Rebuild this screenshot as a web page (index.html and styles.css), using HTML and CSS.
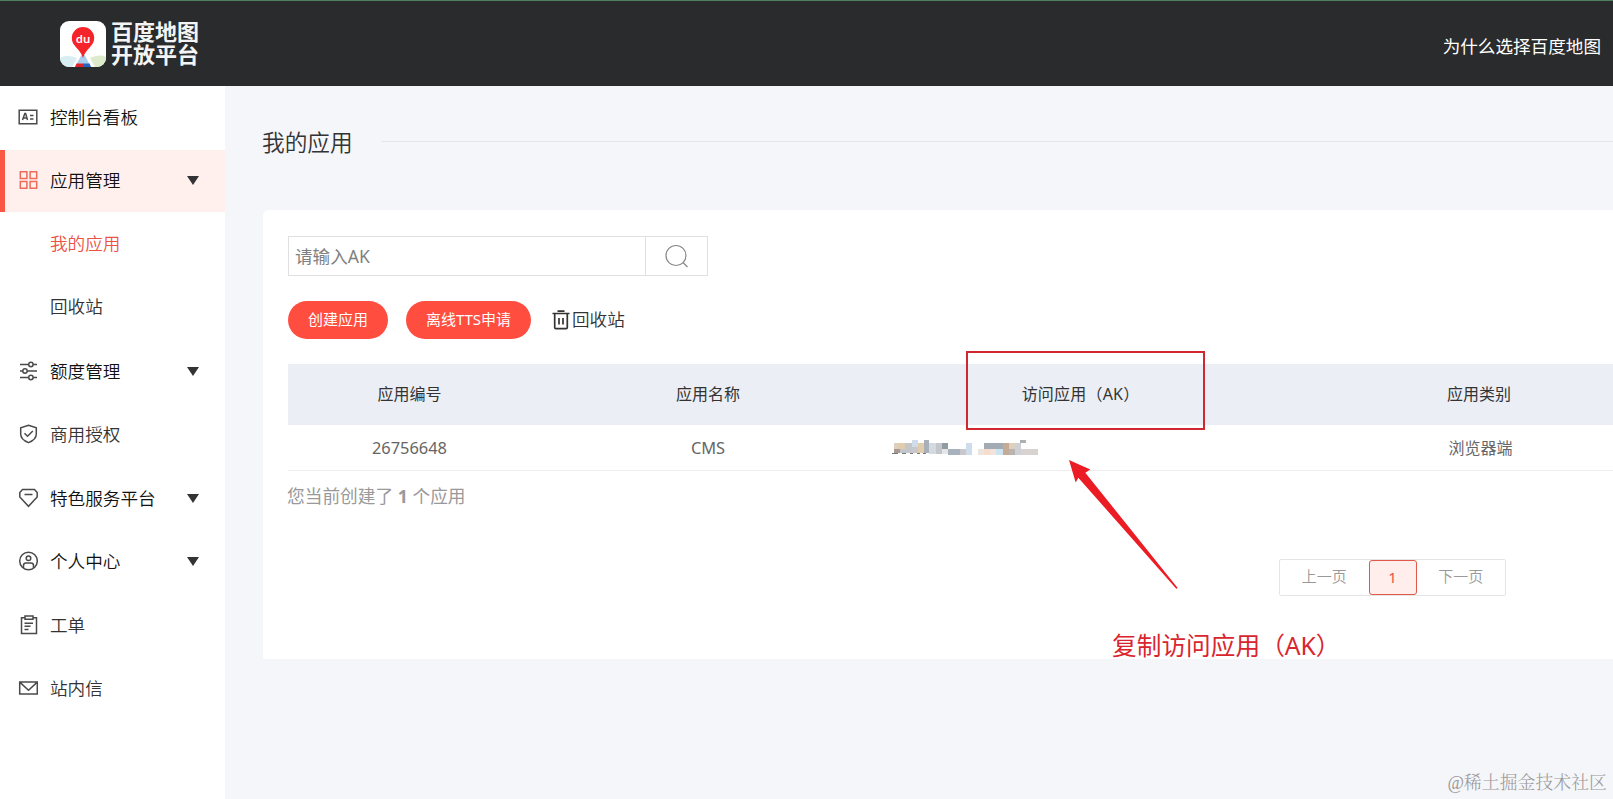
FILE: index.html
```html
<!DOCTYPE html>
<html lang="zh-CN">
  <head>
    <meta charset="UTF-8" />
    <meta name="viewport" content="width=device-width, initial-scale=1.0" />
    <title>百度地图开放平台 - 我的应用</title>
    <link rel="stylesheet" href="styles.css">
  </head>
  <body>
    <header class="header">
      <div class="logo">
        <svg class="logo-icon" viewBox="0 0 46 46">
          <defs>
            <clipPath id="logo-clip"><rect width="46" height="46" rx="9" /></clipPath>
          </defs>
          <g clip-path="url(#logo-clip)">
            <rect width="46" height="46" fill="#fff" />
            <path d="M0 37c5-3 12-2 17 0l-5 9H0z" fill="#d9eef3" />
            <path d="M46 36c-5-3-11-1-16 1l5 9h11z" fill="#dcebcb" />
            <path d="M23 31l-8 15h16z" fill="#a9cdee" />
            <path d="M16.500 42.500H23V46h-8z" fill="#e0242c" />
            <path d="M23 42.500h6.500L31 46h-8z" fill="#2462c4" />
            <path d="M23 6a11.200 11.200 0 0 0-11.200 11.200c0 8 8.700 10.500 11.200 19.800 2.500-9.300 11.200-11.800 11.200-19.800A11.200 11.200 0 0 0 23 6z" fill="#f5232a" />
          </g>
          <text x="23" y="21.500" class="logo-du">du</text>
        </svg>
        <div class="logo-text">
          <span>百度地图</span>
          <span>开放平台</span>
        </div>
      </div>
      <a class="header-link">为什么选择百度地图</a>
    </header>

    <div class="layout">
      <nav class="sidebar">
        <a class="menu-item">
          <svg class="menu-icon" viewBox="0 0 20 20"><path d="M1.200 3.200h17.600v13.600H1.200zM4.500 13l2.300-6.500h.8L9.500 13M5.200 11h4M12 8.500h3.500M12 12h3.500" /></svg>
          <span>控制台看板</span>
        </a>
        <a class="menu-item active">
          <svg class="menu-icon" viewBox="0 0 20 20"><path d="M2.300 1.800h6.600v6.600H2.300zM12.100 1.800h6.600v6.600h-6.600zM2.300 11.600h6.600v6.600H2.300zM12.100 11.600h6.600v6.600h-6.600z" /></svg>
          <span>应用管理</span>
          <i class="caret"></i>
        </a>
        <a class="menu-item sub current"><span>我的应用</span></a>
        <a class="menu-item sub"><span class="dark">回收站</span></a>
        <a class="menu-item">
          <svg class="menu-icon" viewBox="0 0 20 20"><path d="M2 3.500h8.600M15.200 3.500H19M2 10h2.700M9.300 10H19M2 16.500h8.600M15.200 16.500H19" /><circle cx="12.900" cy="3.500" r="2.200" /><circle cx="7" cy="10" r="2.200" /><circle cx="12.900" cy="16.500" r="2.200" /></svg>
          <span>额度管理</span>
          <i class="caret"></i>
        </a>
        <a class="menu-item">
          <svg class="menu-icon" viewBox="0 0 20 20"><path d="M10.500 1.200l7.800 2.500v6.300c0 4.200-3.300 6.900-7.800 8.600C6 16.900 2.700 14.200 2.700 10V3.700zM6.500 9.300l3 3 5.300-5.300" /></svg>
          <span class="dark">商用授权</span>
        </a>
        <a class="menu-item">
          <svg class="menu-icon" viewBox="0 0 20 20"><path d="M4.500 1.500h12l2.700 3V9l-8.700 9.300L1.800 9V4.500zM6.500 6.500h8" /></svg>
          <span>特色服务平台</span>
          <i class="caret"></i>
        </a>
        <a class="menu-item">
          <svg class="menu-icon" viewBox="0 0 20 20"><circle cx="10.500" cy="10" r="8.800" /><circle cx="10.500" cy="7.200" r="2.300" /><path d="M5.500 17v-2.500c0-1.500 1-2.500 2.500-2.500h5c1.500 0 2.500 1 2.500 2.500V17" /></svg>
          <span>个人中心</span>
          <i class="caret"></i>
        </a>
        <a class="menu-item">
          <svg class="menu-icon" viewBox="0 0 20 20"><path d="M7 2.700H3.500v15.800h15V2.700H15M7 1h8v3.200H7zM6.500 8.300H15M6.500 11.300h6M6.500 14.500h4" /></svg>
          <span class="dark">工单</span>
        </a>
        <a class="menu-item">
          <svg class="menu-icon" viewBox="0 0 20 20"><path d="M1.700 4h17.600v12H1.700zM2 4.400l8.500 7.800L19 4.400" /></svg>
          <span class="dark">站内信</span>
        </a>
      </nav>

      <main class="content">
        <div class="page-title">
          <h1>我的应用</h1>
        </div>

        <section class="card">
          <div class="search">
            <input class="search-input" type="text" placeholder="请输入AK" />
            <button class="search-btn">
              <svg viewBox="0 0 24 24"><circle cx="11" cy="11.500" r="10" /><path d="M18 18.500l4.500 4.500" /></svg>
            </button>
          </div>

          <div class="toolbar">
            <button class="btn create">创建应用</button>
            <button class="btn tts">离线TTS申请</button>
            <a class="recycle">
              <svg viewBox="0 0 18 20"><path d="M.5 3.500h17M5.500 1.200h7M2.700 4v13.500q0 1.200 1.200 1.200h10.200q1.200 0 1.200-1.200V4M7 8v6.500M11 8v6.500" /></svg>
              <span>回收站</span>
            </a>
          </div>

          <table class="app-table">
            <colgroup>
              <col class="col-id" />
              <col class="col-name" />
              <col class="col-ak" />
              <col class="col-type" />
            </colgroup>
            <thead>
              <tr>
                <th>应用编号</th>
                <th>应用名称</th>
                <th class="ak-title">访问应用（AK）</th>
                <th>应用类别</th>
              </tr>
            </thead>
            <tbody>
              <tr>
                <td class="latin">26756648</td>
                <td class="latin">CMS</td>
                <td class="ak">
                  <svg class="mosaic" viewBox="0 0 147 16">
                    <path fill="#ddd0c2" d="M2 3h12v9H2z" />
                    <path fill="#a89a92" d="M2 9h6v4H2z" />
                    <path fill="#e2ccae" d="M6 3h7v6H6zM26 3h7v10h-7z" />
                    <path fill="#c5c6ca" d="M13 3h7v10h-7zM8 9h6v4H8z" />
                    <path fill="#cfdcec" d="M20 0h6v7h-6zM74 3h6v12h-6z" />
                    <path fill="#c8c8cc" d="M20 7h6v6h-6zM68 9h6v6h-6z" />
                    <path fill="#a9b0b8" d="M32 0h5v13h-5z" />
                    <path fill="#d3dae2" d="M37 3h7v11h-7z" />
                    <path fill="#c3c7cb" d="M44 3h6v11h-6z" />
                    <path fill="#8f9ba0" d="M50 3h6v6h-6z" />
                    <path fill="#e4e6e8" d="M50 9h6v5h-6z" />
                    <path fill="#a8b2bc" d="M56 9h12v6H56z" />
                    <path fill="#ece4e0" d="M86 9h7v6h-7z" />
                    <path fill="#a2abb4" d="M92 3h19v6H92z" />
                    <path fill="#f6dcca" d="M92 9h6v6h-6z" />
                    <path fill="#f2e4dc" d="M98 9h6v6h-6z" />
                    <path fill="#cce4f2" d="M104 9h7v6h-7z" />
                    <path fill="#c5aa96" d="M111 3h6v12h-6z" />
                    <path fill="#ddd0bc" d="M117 3h6v6h-6z" />
                    <path fill="#b9b4b2" d="M117 9h6v6h-6z" />
                    <path fill="#cdd0d4" d="M123 3h6v12h-6z" />
                    <path fill="#a9b0b6" d="M128 0h6v3h-6z" />
                    <path fill="#d8d3d1" d="M129 9h17v6h-17z" />
                    <path fill="#777" d="M0 13h6v1H0zM10 13h4v1h-4zM18 13h3v1h-3zM25 13h3v1h-3zM31 13h3v1h-3z" />
                  </svg>
                </td>
                <td class="type">浏览器端</td>
              </tr>
            </tbody>
          </table>

          <p class="summary">您当前创建了 <strong>1</strong> 个应用</p>

          <div class="pagination">
            <a class="page prev">上一页</a>
            <a class="page number">1</a>
            <a class="page next">下一页</a>
          </div>
        </section>
      </main>
    </div>

    <!-- 标注 -->
    <div class="mark-box"></div>
    <svg class="mark-arrow" viewBox="0 0 110 130"><path d="M0 0l21.300 9.500-5 3.200L108.700 128l-1.400.7L9.300 17.700 6.700 22.500z" /></svg>
    <div class="mark-text">复制访问应用（AK）</div>
    <div class="watermark">@稀土掘金技术社区</div>
  </body>
</html>
```
FILE: styles.css
```css
:root {
  --red: #ff4d40;
  --mark: #d9262e;
  --text: #333;
}

* {
  margin: 0;
  padding: 0;
  box-sizing: border-box;
}

body {
  position: relative;
  width: 1613px;
  height: 799px;
  overflow: hidden;
  font-family: "Noto Sans", "Noto Sans CJK SC", sans-serif;
  font-weight: 350;
  font-size: 17.6px;
  color: var(--text);
  background-color: #f5f6fa;
}

button,
input {
  font: inherit;
}

.header {
  display: flex;
  justify-content: space-between;
  align-items: center;
  height: 86px;
  padding: 0 12px 0 60px;
  border-top: 1px solid #4f7f60;
  background-color: #292b2c;
}

.logo {
  display: flex;
  align-items: center;
  gap: 5px;
}

.logo-icon {
  width: 46px;
  height: 46px;
}

.logo-du {
  fill: #fff;
  font-size: 11.5px;
  font-weight: 600;
  text-anchor: middle;
}

.logo-text {
  display: flex;
  flex-direction: column;
  font-family: "Liberation Sans", "Noto Sans CJK SC", sans-serif;
  font-size: 22px;
  font-weight: 700;
  line-height: 23px;
  color: #f4f4f4;
}

.header-link {
  padding-top: 4px;
  font-weight: 400;
  color: #fff;
}

.layout {
  display: flex;
  height: 713px;
}

.sidebar {
  display: flex;
  flex: none;
  flex-direction: column;
  gap: 1.5px;
  width: 225px;
  padding-top: 0.4px;
  background-color: #fff;
}

.menu-item {
  display: flex;
  flex: none;
  align-items: center;
  height: 62px;
  padding: 0 26px 0 18px;
  color: #111;
}

.menu-item span {
  padding-bottom: 2px;
}

.menu-item.active {
  padding-left: 13px;
  border-left: 5px solid #f95643;
  background-color: #fff0ee;
}

.menu-item.sub {
  padding-left: 50px;
}

.menu-item.sub span {
  padding-bottom: 4px;
}

.menu-item.current {
  color: #ea5345;
}

.menu-item .dark {
  color: var(--text);
}

.menu-icon {
  width: 20px;
  height: 20px;
  margin: 0 12px 1px 0;
  fill: none;
  stroke: #4a4a4a;
  stroke-width: 1.5;
}

.active .menu-icon {
  stroke: #f06a58;
}

.caret {
  margin-left: auto;
  border: 6px solid transparent;
  border-top: 9px solid #333;
  border-bottom: 0;
}

.content {
  flex: 1;
  padding: 38px 0 0 38px;
}

.page-title {
  display: flex;
  align-items: center;
  gap: 28px;
  height: 38px;
  margin-left: -1px;
}

.page-title::after {
  content: "";
  flex: 1;
  height: 1px;
  background-color: #e4e6ea;
  margin-bottom: 3px;
}

.page-title h1 {
  padding-bottom: 3px;
  font-size: 22.7px;
  font-weight: 350;
}

.card {
  height: 449px;
  margin-top: 48px;
  padding: 26px 0 0 25px;
  border-radius: 6px 0 0 0;
  background-color: #fff;
}

.search {
  display: flex;
  width: 420px;
  height: 40px;
  border: 1px solid #e0e0e0;
}

.search-input {
  width: 357px;
  padding: 0 6px;
  border: 0;
  border-right: 1px solid #e0e0e0;
  outline: 0;
  background: none;
  font-weight: 400;
}

.search-input::placeholder {
  color: #808080;
}

.search-btn {
  display: flex;
  flex: 1;
  justify-content: center;
  align-items: center;
  border: 0;
  background: none;
}

.search-btn svg {
  width: 24px;
  height: 24px;
  fill: none;
  stroke: #888;
  stroke-width: 1.2;
}

.toolbar {
  display: flex;
  align-items: center;
  height: 38px;
  margin-top: 25px;
}

.btn {
  height: 38px;
  padding-bottom: 3px;
  border: 0;
  border-radius: 19px;
  font-size: 15px;
  font-weight: 400;
  color: #fff;
  background-color: var(--red);
}

.create {
  width: 100px;
  margin-right: 18px;
}

.tts {
  width: 125px;
  margin-right: 21px;
}

.recycle {
  display: flex;
  align-items: center;
  gap: 2px;
}

.recycle span {
  padding-bottom: 4px;
}

.recycle svg {
  width: 18px;
  height: 20px;
  fill: none;
  stroke: #333;
  stroke-width: 1.7;
}

.app-table {
  width: 1398px;
  margin-top: 25px;
  table-layout: fixed;
  border-collapse: collapse;
  font-size: 16px;
  font-weight: 400;
}

.col-id {
  width: 243px;
}

.col-name {
  width: 354px;
}

.col-ak {
  width: 387px;
}

.col-type {
  width: 414px;
}

.app-table th {
  height: 61px;
  padding-bottom: 3px;
  font-weight: 400;
  background-color: #ebeef5;
}

.app-table .ak-title {
  padding-left: 4px;
  letter-spacing: 0.2px;
}

.app-table td {
  height: 45px;
  border-bottom: 1px solid #eee;
  text-align: center;
  color: #666;
}

.app-table .latin {
  padding-top: 2px;
  font-size: 16.4px;
  line-height: 22px;
}

.app-table .ak {
  padding: 2px 0 0 7px;
  text-align: left;
}

.app-table .type {
  padding: 0 0 1px 3px;
}

.mosaic {
  display: block;
  width: 147px;
  height: 16px;
}

.summary {
  margin: 13px 0 0 -1px;
  font-size: 17.7px;
  font-weight: 400;
  line-height: 24px;
  color: #999;
}

.pagination {
  display: flex;
  width: 227px;
  height: 37px;
  margin: 51px 0 0 991px;
  padding: 1px 0 0;
  border: 1px solid #e5e5e5;
  border-radius: 2px;
  font-size: 15px;
  color: #999;
}

.page {
  display: flex;
  flex: 1;
  justify-content: center;
  align-items: center;
  height: 33px;
  padding-bottom: 3px;
}

.page.number {
  flex: none;
  width: 48px;
  height: 35px;
  margin-top: -1px;
  padding-bottom: 0;
  border: 1px solid #e0594b;
  border-radius: 3px;
  font-weight: 400;
  color: #ea5345;
  background-color: #ffeeeb;
}

.mark-box {
  position: absolute;
  left: 966px;
  top: 351px;
  width: 239px;
  height: 79px;
  border: 2px solid #cf2831;
}

.mark-arrow {
  position: absolute;
  left: 1069px;
  top: 460px;
  width: 110px;
  height: 130px;
  fill: #ec1c24;
}

.mark-text {
  position: absolute;
  left: 1112px;
  top: 628px;
  font-size: 24.7px;
  font-weight: 400;
  line-height: 36px;
  white-space: nowrap;
  color: var(--mark);
}

.watermark {
  position: absolute;
  right: 6px;
  bottom: 4px;
  font-family: "Liberation Serif", "Noto Serif CJK SC", "Noto Sans CJK SC", serif;
  font-size: 17.9px;
  line-height: 24px;
  color: #999;
}
```
